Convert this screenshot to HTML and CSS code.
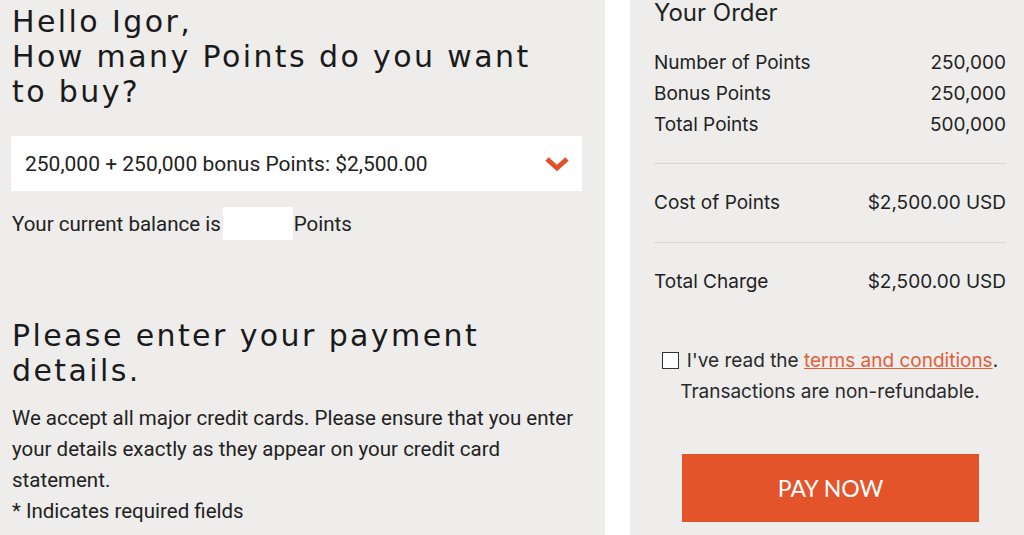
FILE: index.html
```html
<!DOCTYPE html>
<html lang="en">
<head>
    <meta charset="UTF-8">
    <meta name="viewport" content="width=device-width, initial-scale=1.0">
    <title>Buy Points</title>
    <link rel="stylesheet" href="styles.css">
</head>
<body>
    <div class="page">
        <!-- Left: points selection and payment intro -->
        <main class="buy-panel">
            <h1 class="title">Hello Igor,<br>How many Points do you want to buy?</h1>

            <div class="points-select">
                <span>250,000 + 250,000 bonus Points: $2,500.00</span>
                <svg class="chevron" width="24" height="16" viewBox="0 0 24 16">
                    <path d="M2 3 L12 12 L22 3" fill="none" stroke="#e0522a" stroke-width="5"/>
                </svg>
            </div>

            <p class="balance">Your current balance is <span class="balance-mask"></span>Points</p>

            <h2 class="title payment-title">Please enter your payment details.</h2>
            <p class="info">We accept all major credit cards. Please ensure that you enter your details exactly as they appear on your credit card statement.</p>
            <p class="info">* Indicates required fields</p>
        </main>

        <!-- Right: order summary -->
        <aside class="order-panel">
            <h3 class="order-title">Your Order</h3>

            <div class="order-group">
                <div class="order-row"><span>Number of Points</span><span>250,000</span></div>
                <div class="order-row"><span>Bonus Points</span><span>250,000</span></div>
                <div class="order-row"><span>Total Points</span><span>500,000</span></div>
            </div>

            <div class="order-group single">
                <div class="order-row"><span>Cost of Points</span><span>$2,500.00 USD</span></div>
            </div>

            <div class="order-group single last">
                <div class="order-row"><span>Total Charge</span><span>$2,500.00 USD</span></div>
            </div>

            <p class="terms">
                <input type="checkbox" id="agree"><label for="agree">I've read the <a href="#">terms and conditions</a>.</label><br>
                Transactions are non-refundable.
            </p>

            <button class="pay-btn">PAY NOW</button>
        </aside>
    </div>
</body>
</html>
```

FILE: styles.css
```css
body {
    margin: 0;
    background: #fff;
    color: #222;
    font-family: Roboto, "Liberation Sans", sans-serif;
}

.page {
    display: flex;
    height: 535px;
    overflow: hidden;
}

.buy-panel {
    width: 605px;
    background: #eeedeb;
    padding: 4px 0 0 12px;
    box-sizing: border-box;
}

.title {
    font-family: "DejaVu Sans", sans-serif;
    font-weight: normal;
    font-size: 30px;
    line-height: 35px;
    letter-spacing: 2.4px;
    margin: 0;
    width: 560px;
    color: #1a1a1a;
}

.points-select {
    width: 571px;
    height: 55px;
    margin: 27px 0 0 -1px;
    background: #fff;
    display: flex;
    align-items: center;
    justify-content: space-between;
    padding: 0 13px 0 14px;
    box-sizing: border-box;
    font-size: 21px;
}

.chevron {
    display: block;
}

.balance {
    font-size: 20.5px;
    margin: 16px 0 0;
    display: flex;
    align-items: center;
}

.balance-mask {
    display: inline-block;
    width: 70px;
    height: 33px;
    background: #fff;
    margin: 0 1px 0 2px;
}

.payment-title {
    margin-top: 78px;
    width: 520px;
}

.info {
    font-size: 20.5px;
    line-height: 31px;
    margin: 15px 0 0;
    width: 580px;
}

.info + .info {
    margin-top: 0;
}

.order-panel {
    flex: 1;
    margin-left: 25px;
    background: #eeedeb;
    padding: 0 18px 0 24px;
    font-family: Inter, "Open Sans", sans-serif;
    font-size: 19px;
}

.order-title {
    font-weight: normal;
    font-size: 24px;
    line-height: 26px;
    margin: 0 0 21px;
}

.order-row {
    display: flex;
    justify-content: space-between;
    line-height: 31px;
}

.order-group {
    padding-bottom: 23px;
    border-bottom: 1px solid #d8d7d4;
}

.order-group.single {
    padding: 23px 0 24px;
}

.order-group.last {
    border-bottom: none;
}

.terms {
    margin: 24px 0 0;
    line-height: 31px;
    text-align: center;
    color: #2a2a2a;
}

.terms input {
    width: 17px;
    height: 17px;
    margin: 0 8px 0 0;
    vertical-align: -2px;
    appearance: none;
    border: 1px solid #333;
    background: #fff;
}

.terms a {
    color: #e0603a;
}

.pay-btn {
    display: block;
    width: 297px;
    height: 68px;
    margin: 47px 0 0 28px;
    background: #e4542b;
    color: #fff;
    border: none;
    font-family: Lato, sans-serif;
    font-size: 23px;
    cursor: pointer;
}
```
